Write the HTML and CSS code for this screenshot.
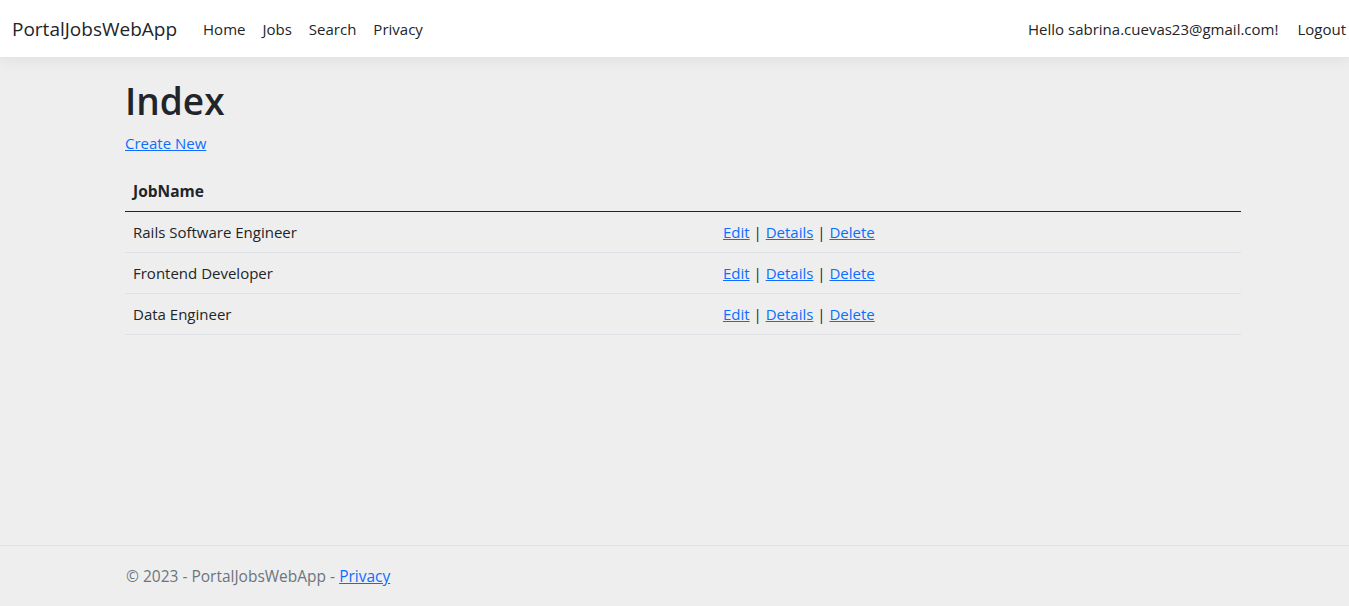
FILE: index.html
```html
<!DOCTYPE html>
<html lang="en">
<head>
<meta charset="utf-8">
<title>Index - PortalJobsWebApp</title>
<link rel="stylesheet" href="styles.css">
</head>
<body>
<header class="navbar">
  <a class="brand" href="#">PortalJobsWebApp</a>
  <nav class="nav-main">
    <a class="nav-link" href="#">Home</a>
    <a class="nav-link" href="#">Jobs</a>
    <a class="nav-link" href="#">Search</a>
    <a class="nav-link" href="#">Privacy</a>
  </nav>
  <div class="nav-user">
    <span class="nav-link nav-hello">Hello sabrina.cuevas23@gmail.com!</span>
    <a class="nav-link nav-last" href="#">Logout</a>
  </div>
</header>
<main class="container">
  <h1 class="title">Index</h1>
  <p class="create"><a href="#">Create New</a></p>
  <table class="table">
    <thead>
      <tr><th class="col-name">JobName</th><th></th></tr>
    </thead>
    <tbody>
      <tr><td>Rails Software Engineer</td><td><a href="#">Edit</a> | <a href="#">Details</a> | <a href="#">Delete</a></td></tr>
      <tr><td>Frontend Developer</td><td><a href="#">Edit</a> | <a href="#">Details</a> | <a href="#">Delete</a></td></tr>
      <tr><td>Data Engineer</td><td><a href="#">Edit</a> | <a href="#">Details</a> | <a href="#">Delete</a></td></tr>
    </tbody>
  </table>
</main>
<footer class="footer">
  <div class="footer-inner">&copy; 2023 - PortalJobsWebApp - <a href="#">Privacy</a></div>
</footer>
</body>
</html>
```
FILE: styles.css
```css
* { box-sizing: border-box; }
html, body { height: 100%; }
body {
  margin: 0;
  background: #eeeeee;
  font-family: "Open Sans", "Noto Sans", sans-serif;
  font-size: 15px;
  color: #212529;
  display: flex;
  flex-direction: column;
}
a { color: #0d6efd; }
.navbar {
  background: #fff;
  height: 58px;
  display: flex;
  align-items: center;
  padding: 0 0 0 12px;
  box-shadow: 0 0.25rem 0.75rem rgba(0,0,0,0.05);
  border-bottom: 1px solid #e6e6e6;
}
.brand {
  font-size: 19px;
  color: #212529;
  text-decoration: none;
  margin-right: 18px;
}
.nav-main, .nav-user { display: flex; }
.nav-main .nav-link + .nav-link { margin-left: 1px; }
.nav-user { margin-left: auto; }
.nav-link {
  color: #212529;
  text-decoration: none;
  padding: 8px 8px;
}
.nav-user .nav-hello { padding: 8px 10px 8px 8px; }
.nav-user .nav-last { padding: 8px 3px 8px 9px; }
.container {
  width: 1116px;
  margin-left: 125px;
  flex: 1;
}
.title {
  font-size: 37px;
  font-weight: 600;
  margin: 21px 0 10px;
  line-height: 1.2;
}
.create { margin: 0 0 18px; }
.table {
  width: 100%;
  border-collapse: collapse;
}
.table th, .table td {
  text-align: left;
  padding: 8px 8px;
  line-height: 24px;
}
.table .col-name { width: 590px; }
.table th { font-weight: 700; font-size: 15.5px; border-bottom: 1px solid #212529; }
.table td { border-bottom: 1px solid #dee2e6; }
.footer {
  border-top: 1px solid #dee2e6;
  height: 61px;
  line-height: 60px;
  color: #6c757d;
  font-size: 15.5px;
}
.footer-inner { margin-left: 126px; }
```
